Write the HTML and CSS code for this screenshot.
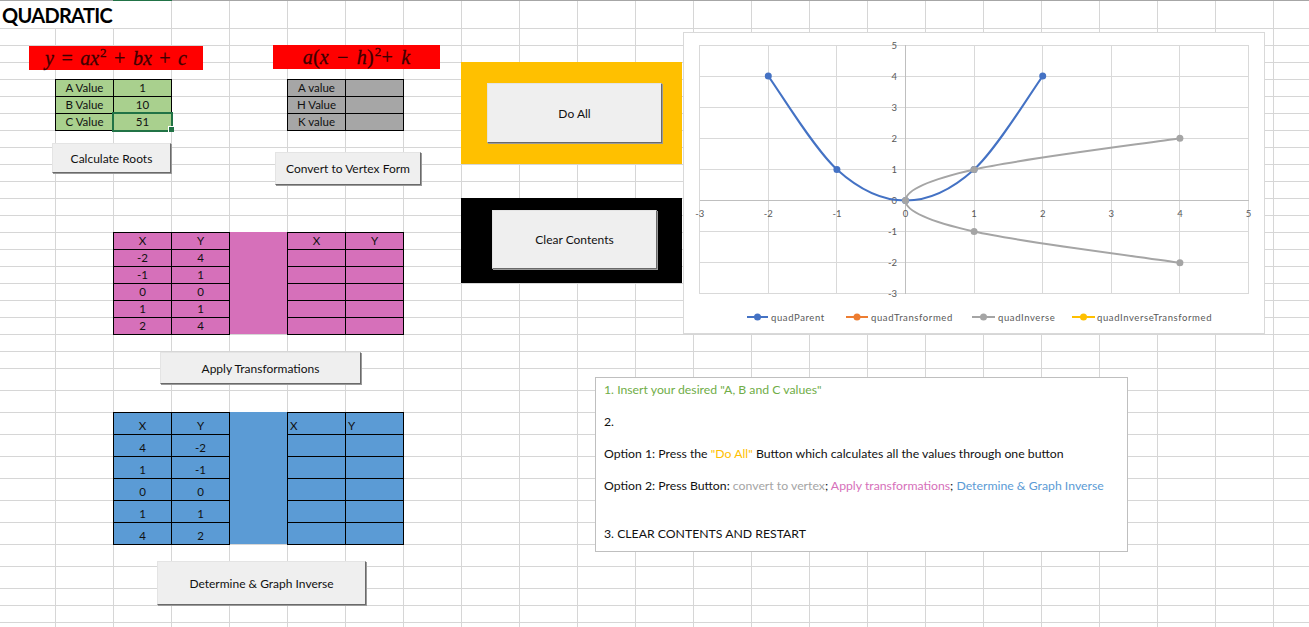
FILE: index.html
```html
<!DOCTYPE html>
<html lang="en">
<head>
<meta charset="utf-8">
<title>QUADRATIC</title>
<link rel="stylesheet" href="styles.css">
</head>
<body>
<div class="sheet">
  <div class="title">QUADRATIC</div>

  <div class="tbl green">
    <div>A Value</div><div>1</div>
    <div>B Value</div><div>10</div>
    <div>C Value</div><div>51</div>
  </div>
  <div class="selection"><span class="handle"></span></div>

  <div class="tbl gray">
    <div>A value</div><div></div>
    <div>H Value</div><div></div>
    <div>K value</div><div></div>
  </div>

  <div class="fill pink pink-m"></div>
  <div class="tbl pink pink-l">
    <div>X</div><div>Y</div>
    <div>-2</div><div>4</div>
    <div>-1</div><div>1</div>
    <div>0</div><div>0</div>
    <div>1</div><div>1</div>
    <div>2</div><div>4</div>
  </div>
  <div class="tbl pink pink-r">
    <div>X</div><div>Y</div>
    <div></div><div></div>
    <div></div><div></div>
    <div></div><div></div>
    <div></div><div></div>
    <div></div><div></div>
  </div>

  <div class="fill blue blue-m"></div>
  <div class="tbl blue blue-l">
    <div>X</div><div>Y</div>
    <div>4</div><div>-2</div>
    <div>1</div><div>-1</div>
    <div>0</div><div>0</div>
    <div>1</div><div>1</div>
    <div>4</div><div>2</div>
  </div>
  <div class="tbl blue blue-r">
    <div class="left">X</div><div class="left">Y</div>
    <div></div><div></div>
    <div></div><div></div>
    <div></div><div></div>
    <div></div><div></div>
    <div></div><div></div>
  </div>

  <!-- floating objects -->
  <div class="formula f1"><i>y</i> = <i>ax</i><span class="sup">2</span> + <i>bx</i> + <i>c</i></div>
  <div class="formula f2"><i>a</i>(<i>x</i> − <i>h</i>)<span class="sup">2</span>+ <i>k</i></div>

  <div class="btn b-roots">Calculate Roots</div>
  <div class="btn b-vertex">Convert to Vertex Form</div>
  <div class="btn b-apply">Apply Transformations</div>
  <div class="btn b-inverse">Determine &amp; Graph Inverse</div>

  <div class="panel p-yellow"><div class="btn">Do All</div></div>
  <div class="panel p-black"><div class="btn">Clear Contents</div></div>

  <div class="chart">
    <svg width="580" height="300" viewBox="684 33 580 300" xmlns="http://www.w3.org/2000/svg">
      <path class="grid" d="M699.7 45V293.8 M768.3 45V293.8 M836.9 45V293.8 M974.1 45V293.8 M1042.7 45V293.8 M1111.3 45V293.8 M1179.9 45V293.8 M1248.5 45V293.8 M699.7 45H1248.5 M699.7 76.1H1248.5 M699.7 107.2H1248.5 M699.7 138.3H1248.5 M699.7 169.4H1248.5 M699.7 231.6H1248.5 M699.7 262.7H1248.5 M699.7 293.8H1248.5"/>
      <path class="axis" d="M699.7 200.5H1248.5 M905.5 45V293.8"/>
      <g class="ylab">
        <text x="897" y="48.5">5</text>
        <text x="897" y="79.6">4</text>
        <text x="897" y="110.7">3</text>
        <text x="897" y="141.8">2</text>
        <text x="897" y="172.9">1</text>
        <text x="897" y="204">0</text>
        <text x="897" y="235.1">-1</text>
        <text x="897" y="266.2">-2</text>
        <text x="897" y="297.3">-3</text>
      </g>
      <g class="xlab">
        <text x="699.7" y="216.5">-3</text>
        <text x="768.3" y="216.5">-2</text>
        <text x="836.9" y="216.5">-1</text>
        <text x="905.5" y="216.5">0</text>
        <text x="974.1" y="216.5">1</text>
        <text x="1042.7" y="216.5">2</text>
        <text x="1111.3" y="216.5">3</text>
        <text x="1179.9" y="216.5">4</text>
        <text x="1248.5" y="216.5">5</text>
      </g>
      <path class="s-parent" d="M768.3,76.1 C779.7,91.7 814.0,148.7 836.9,169.4 C859.8,190.1 882.6,200.5 905.5,200.5 C928.4,200.5 951.2,190.1 974.1,169.4 C997.0,148.7 1031.3,91.7 1042.7,76.1"/>
      <g class="m-parent">
        <circle cx="768.3" cy="76.1" r="3.5"/>
        <circle cx="836.9" cy="169.4" r="3.5"/>
        <circle cx="905.5" cy="200.5" r="3.5"/>
        <circle cx="974.1" cy="169.4" r="3.5"/>
        <circle cx="1042.7" cy="76.1" r="3.5"/>
      </g>
      <path class="s-inverse" d="M1179.9,262.7 C1145.6,257.5 1019.8,242.0 974.1,231.6 C928.4,221.2 905.5,210.9 905.5,200.5 C905.5,190.1 928.4,179.8 974.1,169.4 C1019.8,159.0 1145.6,143.5 1179.9,138.3"/>
      <g class="m-inverse">
        <circle cx="1179.9" cy="262.7" r="3.5"/>
        <circle cx="974.1" cy="231.6" r="3.5"/>
        <circle cx="905.5" cy="200.5" r="3.5"/>
        <circle cx="974.1" cy="169.4" r="3.5"/>
        <circle cx="1179.9" cy="138.3" r="3.5"/>
      </g>
      <g class="legend">
        <path d="M747 317H768" stroke="#4472c4"/><circle cx="757.5" cy="317" r="3.5" fill="#4472c4"/>
        <text x="771" y="320.5">quadParent</text>
        <path d="M846 317H868" stroke="#ed7d31"/><circle cx="857" cy="317" r="3.5" fill="#ed7d31"/>
        <text x="871" y="320.5">quadTransformed</text>
        <path d="M972 317H995" stroke="#a5a5a5"/><circle cx="983.5" cy="317" r="3.5" fill="#a5a5a5"/>
        <text x="998" y="320.5">quadInverse</text>
        <path d="M1072 317H1095" stroke="#ffc000"/><circle cx="1083.5" cy="317" r="3.5" fill="#ffc000"/>
        <text x="1097" y="320.5">quadInverseTransformed</text>
      </g>
    </svg>
  </div>

  <div class="textbox">
    <p class="c-green">1. Insert your desired "A, B and C values"</p>
    <p>2.</p>
    <p>Option 1: Press the <span class="c-yellow">"Do All"</span> Button which calculates all the values through one button</p>
    <p class="gap2">Option 2: Press Button: <span class="c-gray">convert to vertex</span>; <span class="c-pink">Apply transformations</span>; <span class="c-blue">Determine &amp; Graph Inverse</span></p>
    <p>3. CLEAR CONTENTS AND RESTART</p>
  </div>
</div>
</body>
</html>
```

FILE: styles.css
```css
* { box-sizing: border-box; }

html, body {
  margin: 0;
  padding: 0;
  background: #fff;
}

body {
  font-family: "Lato", "Liberation Sans", sans-serif;
  color: #000;
}

/* ---------- worksheet grid ---------- */
.sheet {
  position: relative;
  width: 1309px;
  height: 627px;
  overflow: hidden;
  display: grid;
  grid-template-columns: 55px repeat(22, 58px);
  grid-template-rows: 28px repeat(20, 17px) repeat(10, 22px) repeat(3, 17px);
  background-image:
    repeating-linear-gradient(to right, #d6d6d6 0 1px, transparent 1px 58px),
    repeating-linear-gradient(to bottom, #d6d6d6 0 1px, transparent 1px 17px),
    repeating-linear-gradient(to bottom, #d6d6d6 0 1px, transparent 1px 22px),
    repeating-linear-gradient(to bottom, #d6d6d6 0 1px, transparent 1px 17px);
  background-position: 55px 0, 0 28px, 0 368px, 0 588px;
  background-size: 1254px 627px, 1309px 340px, 1309px 220px, 1309px 51px;
  background-repeat: no-repeat;
}

.sheet::before {
  content: "";
  position: absolute;
  top: 0;
  left: 0;
  right: 0;
  height: 1px;
  background: #a6a6a6;
  z-index: 5;
}

.sheet::after {
  content: "";
  position: absolute;
  top: 0;
  left: 113px;
  width: 59px;
  height: 1px;
  background: #217346;
  z-index: 6;
}

.title {
  grid-column: 1 / 4;
  grid-row: 1;
  background: #fff;
  font-weight: 700;
  font-size: 20px;
  line-height: 30px;
  padding-left: 2px;
  letter-spacing: -0.7px;
  white-space: nowrap;
}

/* ---------- cell tables ---------- */
.tbl {
  display: grid;
  grid-template-columns: 58px 58px;
  grid-auto-rows: 17px;
  border-left: 1px solid #000;
  border-top: 1px solid #000;
  margin: 0 -1px -1px 0;
  font-size: 11.5px;
}

.tbl > div {
  border-right: 1px solid #000;
  border-bottom: 1px solid #000;
  display: flex;
  align-items: flex-end;
  justify-content: center;
  line-height: 16px;
  color: #111;
}

.tbl > div.left {
  justify-content: flex-start;
  padding-left: 2px;
}

.green { grid-column: 2 / 4; grid-row: 5 / 8; background: #a9d08e; }
.gray  { grid-column: 6 / 8; grid-row: 5 / 8; background: #a6a6a6; }

.pink { background: #d670ba; }
.blue { background: #5b9bd5; }

.pink-l { grid-column: 3 / 5; grid-row: 14 / 20; }
.pink-m { grid-column: 5; grid-row: 14 / 20; }
.pink-r { grid-column: 6 / 8; grid-row: 14 / 20; }

.blue-l, .blue-r { grid-auto-rows: 22px; }
.blue-l { grid-column: 3 / 5; grid-row: 24 / 30; }
.blue-m { grid-column: 5; grid-row: 24 / 30; }
.blue-r { grid-column: 6 / 8; grid-row: 24 / 30; }

.selection {
  grid-column: 3;
  grid-row: 7;
  position: relative;
  margin: -1px -2px -2px -1px;
  border: 2px solid #217346;
}

.handle {
  position: absolute;
  right: -3px;
  bottom: -2px;
  width: 6px;
  height: 6px;
  background: #217346;
  border-left: 1px solid #fff;
  border-top: 1px solid #fff;
}

/* ---------- floating shapes ---------- */
.formula {
  position: absolute;
  height: 24px;
  background: #ff0000;
  color: #3d0000;
  font-family: "Liberation Serif", "DejaVu Serif", serif;
  font-size: 20px;
  line-height: 24px;
  text-align: center;
  white-space: nowrap;
  -webkit-text-stroke: 0.3px #3d0000;
}

.formula i { font-style: italic; }

.formula .sup {
  font-size: 13px;
  position: relative;
  top: -8px;
  margin-left: 1px;
}

.f1 { left: 29px; top: 46px; width: 174px; word-spacing: 2.5px; }
.f2 { left: 273px; top: 45px; width: 167px; word-spacing: 3px; letter-spacing: 0.2px; }

.btn {
  background: #efefef;
  border: 1px solid;
  border-color: #e4e4e4 #6a6a6a #6a6a6a #e4e4e4;
  box-shadow: 1px 1px 0 #9a9a9a;
  font-size: 12px;
  color: #111;
  display: flex;
  align-items: center;
  justify-content: center;
  white-space: nowrap;
}

.b-roots, .b-vertex, .b-apply, .b-inverse { position: absolute; }
.b-roots   { left: 52px;  top: 143px; width: 119px; height: 30px; }
.b-vertex  { left: 275px; top: 152px; width: 146px; height: 33px; }
.b-apply   { left: 160px; top: 352px; width: 201px; height: 32px; }
.b-inverse { left: 157px; top: 561px; width: 209px; height: 44px; }

.panel {
  position: absolute;
  display: flex;
}

.panel .btn { flex: 1; }

.p-yellow {
  left: 461px;
  top: 62px;
  width: 221px;
  height: 102px;
  background: #ffc000;
  padding: 21px 20px 21px 26px;
}

.p-black {
  left: 461px;
  top: 198px;
  width: 221px;
  height: 85px;
  background: #000;
  padding: 12px 25px 14px 31px;
}

/* ---------- chart ---------- */
.chart {
  position: absolute;
  left: 683px;
  top: 32px;
  width: 582px;
  height: 302px;
  border: 1px solid #d9d9d9;
  background: #fff;
}

.chart svg { display: block; }

.chart .grid {
  fill: none;
  stroke: #d9d9d9;
  stroke-width: 1;
  shape-rendering: crispEdges;
}

.chart .axis {
  fill: none;
  stroke: #bfbfbf;
  stroke-width: 1;
  shape-rendering: crispEdges;
}

.chart text {
  font-family: "Lato", "Liberation Sans", sans-serif;
  font-size: 9.5px;
  fill: #595959;
}

.chart .ylab text { text-anchor: end; }
.chart .xlab text { text-anchor: middle; }

.s-parent { fill: none; stroke: #4472c4; stroke-width: 2; }
.m-parent circle { fill: #4472c4; }
.s-inverse { fill: none; stroke: #a5a5a5; stroke-width: 2; }
.m-inverse circle { fill: #a5a5a5; }

.legend path { stroke-width: 2; fill: none; }
.legend text { letter-spacing: 0.6px; }

/* ---------- instructions text box ---------- */
.textbox {
  position: absolute;
  left: 595px;
  top: 377px;
  width: 533px;
  height: 175px;
  border: 1px solid #bfbfbf;
  background: #fff;
  padding: 4px 8px;
  font-size: 12.25px;
  line-height: 16px;
  color: #111;
}

.textbox p {
  margin: 0 0 16px;
  white-space: nowrap;
}

.textbox p.gap2 { margin-bottom: 32px; }

.c-green  { color: #70ad47; }
.c-yellow { color: #ffc000; }
.c-gray   { color: #a5a5a5; }
.c-pink   { color: #d670ba; }
.c-blue   { color: #5b9bd5; }
```
